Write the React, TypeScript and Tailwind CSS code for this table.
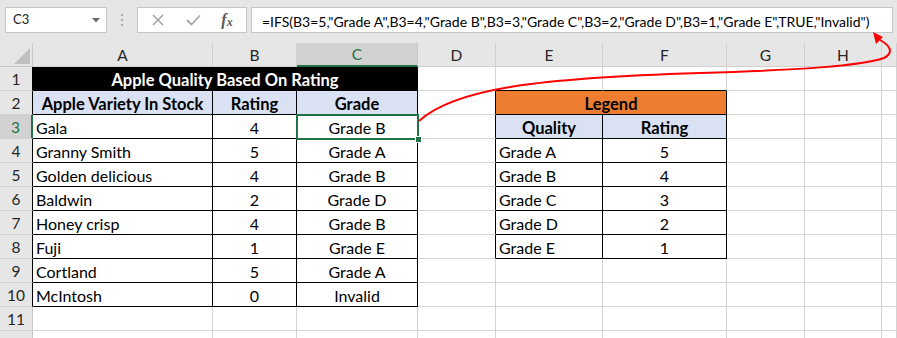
import React from "react";

const T = (r: number, c: number) =>
  (r >= 1 && r <= 10 && c >= 1 && c <= 3) || (r >= 2 && r <= 8 && c >= 5 && c <= 6);

type Spec = { c: number; span?: number; text?: string; cls?: string };

function Cell({ r, c, span = 1, text, cls = "" }: Spec & { r: number }) {
  const cEnd = c + span - 1;
  const rightBlack = T(r, cEnd) || T(r, cEnd + 1);
  let bottomBlack = false;
  for (let k = c; k <= cEnd; k++) if (T(r, k) || T(r + 1, k)) bottomBlack = true;
  const rb = rightBlack ? "border-r-black" : "border-r-[#d4d4d4]";
  const bb = bottomBlack ? "border-b-black" : "border-b-[#d4d4d4]";
  const sp = span === 3 ? "col-span-3" : span === 2 ? "col-span-2" : "";
  return (
    <div
      className={`border-r border-b ${rb} ${bb} ${sp} flex items-center pt-[3px] overflow-hidden whitespace-nowrap text-black ${cls}`}
    >
      {text}
    </div>
  );
}

const L = "justify-start pl-[3px] text-[16px]";
const C = "justify-center text-[16px]";
const B = "justify-center font-bold text-[16.5px]";

const main: [string, string, string][] = [
  ["Gala", "4", "Grade B"],
  ["Granny Smith", "5", "Grade A"],
  ["Golden delicious", "4", "Grade B"],
  ["Baldwin", "2", "Grade D"],
  ["Honey crisp", "4", "Grade B"],
  ["Fuji", "1", "Grade E"],
  ["Cortland", "5", "Grade A"],
  ["McIntosh", "0", "Invalid"],
];

const legend: [string, string][] = [
  ["Grade A", "5"],
  ["Grade B", "4"],
  ["Grade C", "3"],
  ["Grade D", "2"],
  ["Grade E", "1"],
];

function rowSpecs(r: number): Spec[] {
  const specs: Spec[] = [];
  if (r === 1) {
    specs.push({ c: 1, span: 3, text: "Apple Quality Based On Rating", cls: `${B} bg-black text-white` });
  } else if (r === 2) {
    specs.push({ c: 1, text: "Apple Variety In Stock", cls: `${B} bg-[#d9e1f2]` });
    specs.push({ c: 2, text: "Rating", cls: `${B} bg-[#d9e1f2]` });
    specs.push({ c: 3, text: "Grade", cls: `${B} bg-[#d9e1f2]` });
  } else if (r >= 3 && r <= 10) {
    const d = main[r - 3];
    specs.push({ c: 1, text: d[0], cls: L });
    specs.push({ c: 2, text: d[1], cls: C });
    specs.push({ c: 3, text: d[2], cls: C });
  } else {
    specs.push({ c: 1 }, { c: 2 }, { c: 3 });
  }
  specs.push({ c: 4 });
  if (r === 2) {
    specs.push({ c: 5, span: 2, text: "Legend", cls: `${B} bg-[#ed7d31]` });
  } else if (r === 3) {
    specs.push({ c: 5, text: "Quality", cls: `${B} bg-[#d9e1f2]` });
    specs.push({ c: 6, text: "Rating", cls: `${B} bg-[#d9e1f2]` });
  } else if (r >= 4 && r <= 8) {
    const d = legend[r - 4];
    specs.push({ c: 5, text: d[0], cls: L });
    specs.push({ c: 6, text: d[1], cls: C });
  } else {
    specs.push({ c: 5 }, { c: 6 });
  }
  specs.push({ c: 7 }, { c: 8 }, { c: 9 });
  return specs;
}

const letters = ["A", "B", "C", "D", "E", "F", "G", "H", ""];

export default function App() {
  const rows = Array.from({ length: 12 }, (_, i) => i + 1);
  return (
    <div className="relative w-[897px] h-[338px] overflow-hidden bg-white font-[Lato,sans-serif]">
      {/* formula bar */}
      <div className="flex items-start h-[43px] bg-[#e6e6e6] pt-[7px] pl-[5px] pr-[4px]">
        <div className="relative flex items-center w-[102px] h-[26px] bg-white border border-[#c6c6c6] pl-[7px] text-[13px] text-[#222]">
          C3
          <svg className="absolute right-[6px] top-[10px]" width="8" height="5" viewBox="0 0 8 5">
            <path d="M0 0 L8 0 L4 4.5 Z" fill="#6b6b6b" />
          </svg>
        </div>
        <div className="flex flex-col items-center justify-center gap-[3px] w-[30px] h-[26px]">
          <div className="w-[2px] h-[2px] bg-[#b0b0b0]" />
          <div className="w-[2px] h-[2px] bg-[#b0b0b0]" />
          <div className="w-[2px] h-[2px] bg-[#b0b0b0]" />
        </div>
        <div className="flex items-center w-[110px] h-[26px] bg-white border border-[#c6c6c6]">
          <div className="flex items-center justify-center w-[40px]">
            <svg width="12" height="12" viewBox="0 0 12 12">
              <path d="M1 1 L11 11 M11 1 L1 11" stroke="#a6a6a6" strokeWidth="1.6" fill="none" />
            </svg>
          </div>
          <div className="flex items-center justify-center w-[30px]">
            <svg width="15" height="12" viewBox="0 0 15 12">
              <path d="M1 6 L5.5 10.5 L14 1.5" stroke="#a6a6a6" strokeWidth="1.8" fill="none" />
            </svg>
          </div>
          <div className="flex items-center justify-center w-[38px] font-['Liberation_Serif',serif] italic text-[#5a5a5a] text-[16px] font-bold">
            f<span className="text-[12px] mt-[3px]">x</span>
          </div>
        </div>
        <div className="flex items-center flex-1 ml-[4px] h-[26px] bg-white border border-[#c6c6c6] pl-[10px] pt-[3px] text-[14px] text-black whitespace-nowrap overflow-hidden">
          =IFS(B3=5,"Grade A",B3=4,"Grade B",B3=3,"Grade C",B3=2,"Grade D",B3=1,"Grade E",TRUE,"Invalid")
        </div>
      </div>

      {/* sheet */}
      <div className="grid grid-cols-[33px_180px_84px_121px_78px_107px_124px_78px_77px_15px] auto-rows-[24px]">
        {/* header row */}
        <div className="relative bg-[#e6e6e6] border-r border-b border-[#c8c8c8]">
          <svg className="absolute left-[14px] top-[5px]" width="16" height="16" viewBox="0 0 16 16">
            <path d="M16 0 L16 16 L0 16 Z" fill="#c0c0c0" />
          </svg>
        </div>
        {letters.map((l, i) =>
          l === "C" ? (
            <div
              key={i}
              className="flex items-center justify-center pt-[2px] bg-[#d2d2d2] border-r border-r-[#c8c8c8] border-b-2 border-b-[#217346] text-[#217346] text-[15.5px]"
            >
              {l}
            </div>
          ) : (
            <div
              key={i}
              className="flex items-center justify-center pt-[2px] bg-[#e6e6e6] border-r border-b border-[#d0d0d0] text-[#262626] text-[15.5px]"
            >
              {l}
            </div>
          )
        )}
        {rows.map((r) => (
          <React.Fragment key={r}>
            {r === 3 ? (
              <div className="flex items-center justify-center pt-[2px] bg-[#d2d2d2] border-r-2 border-r-[#217346] border-b border-b-[#d0d0d0] text-[#217346] text-[15.5px]">
                {r}
              </div>
            ) : (
              <div
                className={`flex items-center justify-center pt-[2px] bg-[#e6e6e6] border-r border-b border-b-[#d0d0d0] ${
                  T(r, 1) ? "border-r-black" : "border-r-[#c8c8c8]"
                } text-[#262626] text-[15.5px]`}
              >
                {r <= 11 ? r : ""}
              </div>
            )}
            {rowSpecs(r).map((s) => (
              <Cell key={s.c} r={r} {...s} />
            ))}
          </React.Fragment>
        ))}
      </div>

      {/* selection */}
      <div className="absolute left-[296px] top-[114px] w-[123px] h-[26px] border-2 border-[#217346] pointer-events-none" />
      <div className="absolute left-[415px] top-[136px] w-[7px] h-[7px] bg-[#217346] border border-white pointer-events-none" />

      {/* arrow */}
      <svg className="absolute left-0 top-0 pointer-events-none" width="897" height="338" viewBox="0 0 897 338">
        <path
          d="M419 121 C 455 88, 540 78, 700 73 C 800 70, 860 66, 884 58 C 895 52, 889 45, 880 40"
          stroke="#ff0000"
          strokeWidth="2"
          fill="none"
        />
        <path d="M873 32 L883 37 L876 44 Z" fill="#ff0000" />
      </svg>
    </div>
  );
}
